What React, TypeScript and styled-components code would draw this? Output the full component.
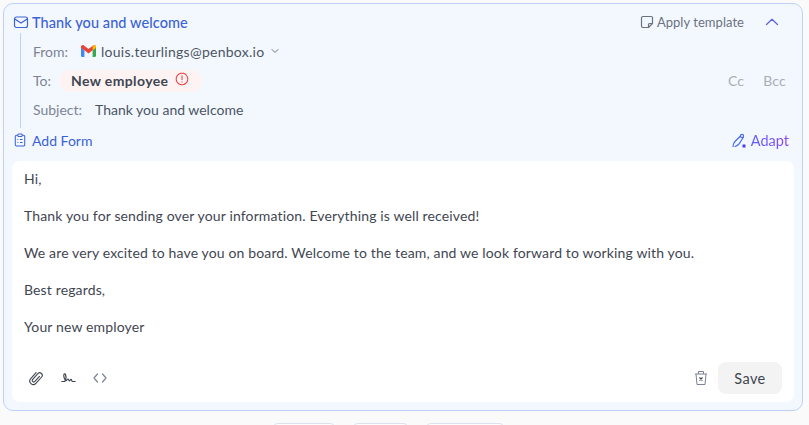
import React from 'react';
import styled, { createGlobalStyle } from 'styled-components';

const GlobalStyle = createGlobalStyle`
  html, body {
    margin: 0;
    height: 425px;
    overflow: hidden;
    background: #fafafa;
    font-family: 'Lato', 'Open Sans', sans-serif;
  }
`;

const Page = styled.div`
  height: 425px;
  padding: 3px 6px 0 3px;
  box-sizing: border-box;
  overflow: hidden;
`;

const Card = styled.section`
  height: 408px;
  box-sizing: border-box;
  background: #f3f8ff;
  border: 1px solid #bdd1f7;
  border-radius: 10px;
  padding: 7px 8px 8px;
  display: flex;
  flex-direction: column;
`;

const TitleRow = styled.div`
  display: flex;
  align-items: center;
  height: 22px;
  padding-left: 1px;
`;

const Title = styled.h1`
  margin: 0 0 0 3px;
  font-size: 14.5px;
  font-weight: 500;
  color: #3b62d6;
  letter-spacing: 0.08px;
`;

const HeaderActions = styled.div`
  margin-left: auto;
  display: flex;
  align-items: center;
  color: #6b7280;
  font-size: 13px;
  padding-right: 15px;
`;

const ApplyLabel = styled.span`
  margin: 0 21px 0 3px;
  letter-spacing: 0.04px;
`;

const Fields = styled.div`
  margin-left: 8px;
  border-left: 1px solid #bdd1f7;
  padding: 3px 0 0 12px;
  height: 95px;
  box-sizing: border-box;
  display: flex;
  flex-direction: column;
`;

const FieldRow = styled.div`
  height: 29px;
  flex-shrink: 0;
  display: flex;
  align-items: center;
  font-size: 14px;
  color: #4b5563;
  &:first-child {
    height: 30px;
  }
`;

const Label = styled.span<{ $width: number }>`
  width: ${({ $width }) => $width}px;
  color: #7b8494;
  flex-shrink: 0;
`;

const Sender = styled.span`
  margin-left: 4px;
  display: flex;
  align-items: center;
  gap: 5px;
  letter-spacing: 0.27px;
`;

const Pill = styled.span`
  display: flex;
  align-items: center;
  height: 22px;
  padding: 0 13px 0 12px;
  background: #fdf3f3;
  border-radius: 11px;
  font-weight: 700;
  color: #3f4652;
  gap: 7px;
  letter-spacing: 0.38px;
`;

const CopyLinks = styled.span`
  margin-left: auto;
  display: flex;
  gap: 19px;
  padding-right: 8px;
  color: #a9aeb9;
  font-size: 14px;
  letter-spacing: 0.2px;
`;

const FormRow = styled.div`
  height: 24px;
  display: flex;
  align-items: center;
  padding: 0 5px 0 2px;
  margin-bottom: 9px;
`;

const AddForm = styled.span`
  display: flex;
  align-items: center;
  gap: 6px;
  color: #3b62d6;
  font-size: 14px;
`;

const Adapt = styled.span`
  margin-left: auto;
  display: flex;
  align-items: center;
  gap: 4px;
  font-size: 14.5px;
  background: linear-gradient(90deg, #4a6cf5, #8a45ff);
  -webkit-background-clip: text;
  background-clip: text;
  color: transparent;
`;

const Editor = styled.div`
  flex: 1;
  background: #fff;
  border-radius: 8px;
  display: flex;
  flex-direction: column;
  padding: 6px 12px 8px;
`;

const Body = styled.div`
  flex: 1;
  font-size: 14px;
  color: #3f4652;
`;

const Para = styled.p`
  margin: 0;
  height: 37px;
  line-height: 23px;
  letter-spacing: 0.14px;
`;

const Toolbar = styled.div`
  display: flex;
  align-items: center;
  padding: 0 0 0 4px;
`;

const ToolGroup = styled.div`
  display: flex;
  align-items: center;
  gap: 17px;
`;

const SaveGroup = styled.div`
  margin-left: auto;
  display: flex;
  align-items: center;
  gap: 10px;
`;

const SaveButton = styled.button`
  width: 64px;
  height: 32px;
  border: none;
  border-radius: 8px;
  background: #f3f3f3;
  color: #3f4652;
  font: 400 14.5px 'Lato', sans-serif;
  letter-spacing: 0.4px;
`;

const Footer = styled.div`
  display: flex;
  margin: 12px 0 0 269px;
  gap: 16px;
`;

const GhostButton = styled.div<{ $width: number }>`
  width: ${({ $width }) => $width}px;
  height: 20px;
  box-sizing: border-box;
  background: #fdfdfe;
  border: 1px solid #dbe2ee;
  border-radius: 6px;
`;

const MailIcon = () => (
  <svg width="16" height="16" viewBox="0 0 16 16" fill="none" stroke="#3b62d6" strokeWidth="1.2">
    <rect x="1.5" y="3" width="13" height="10.5" rx="2" />
    <path d="M1.8 5 8 9l6.2-4" />
  </svg>
);

const NoteIcon = () => (
  <svg width="14" height="14" viewBox="0 0 14 14" fill="none" stroke="#6b7280" strokeWidth="1.2" strokeLinejoin="round">
    <path d="M8.5 12.500H3a1.500 1.500 0 0 1-1.500-1.500V3A1.500 1.500 0 0 1 3 1.500h8A1.500 1.500 0 0 1 12.500 3v5.500z" />
    <path d="M8.500 12.500V9.500a1 1 0 0 1 1-1h3" />
  </svg>
);

const ChevronUp = () => (
  <svg width="14" height="14" viewBox="0 0 14 14" fill="none" stroke="#5b62e0" strokeWidth="1.200" strokeLinecap="round" strokeLinejoin="round">
    <path d="M1.500 9.500 7 4.200l5.500 5.300" />
  </svg>
);

const ChevronDown = () => (
  <svg width="8" height="6" viewBox="0 0 8 6" fill="none" stroke="#6b7280" strokeWidth="1" strokeLinecap="round" strokeLinejoin="round" style={{ marginLeft: 2 }}>
    <path d="M1 1.500 4 4.500l3-3" />
  </svg>
);

const GmailIcon = () => (
  <svg width="15" height="12" viewBox="0 0 15 12">
    <path d="M0 2v8.800C0 11.500.5 12 1.200 12H3.400V5.300z" fill="#4285f4" />
    <path d="M15 2v8.800c0 .7-.5 1.200-1.200 1.200h-2.200V5.300z" fill="#34a853" />
    <path d="M3.400 5.300 0 2.700V1.800C0 .3 1.700-.5 2.900.400L7.500 3.900l4.600-3.500C13.300-.5 15 .3 15 1.800v.9l-3.400 2.600L7.500 8.400z" fill="#ea4335" />
    <path d="M11.600 5.300 15 2.700V1.800C15 .3 13.300-.5 12.100.400L11.600.8z" fill="#fbbc04" />
  </svg>
);

const AlertIcon = () => (
  <svg width="14" height="14" viewBox="0 0 14 14" fill="none" stroke="#e5484d" strokeWidth="1.100" strokeLinecap="round" style={{ marginTop: -4 }}>
    <circle cx="7" cy="7" r="5.800" strokeDasharray="3 0.600" />
    <path d="M7 3.800v3.800M7 9.800v.2" />
  </svg>
);

const ClipboardIcon = () => (
  <svg width="12" height="14" viewBox="0 0 14 16" fill="none" stroke="#3b62d6" strokeWidth="1.200" strokeLinejoin="round">
    <path d="M4.500 2.500H3A1.500 1.500 0 0 0 1.500 4v9.500A1.500 1.500 0 0 0 3 15h8a1.500 1.500 0 0 0 1.500-1.500V4A1.500 1.500 0 0 0 11 2.500H9.500" />
    <rect x="4.500" y="1" width="5" height="3" rx="1" />
    <path d="M4 7.500h1M7 7.500h3M4 11h1M7 11h3" />
  </svg>
);

const AdaptIcon = () => (
  <svg width="15" height="15" viewBox="0 0 15 15" fill="none" stroke="#4a6cf5" strokeWidth="1.200" strokeLinecap="round">
    <path d="M1 13.500C1 11.500 1.500 10 3 8.500L8.500 3" />
    <path d="M3 13.500C5 13 6 12 7 11L11.200 4.500" />
    <circle cx="10" cy="3" r="1.600" />
    <rect x="10.500" y="11.500" width="3" height="3" fill="#4a3fe0" stroke="none" />
  </svg>
);

const PaperclipIcon = () => (
  <svg width="16" height="16" viewBox="0 0 16 16" fill="none" stroke="#3f4652" strokeWidth="1.100" strokeLinecap="round" strokeLinejoin="round">
    <g transform="rotate(42 8 8)">
      <path d="M4.500 4v8a3.500 3.500 0 0 0 7 0V3.500a2.500 2.500 0 0 0-5 0v7.800a1.500 1.500 0 0 0 3 0V4.500" />
    </g>
  </svg>
);

const SignatureIcon = () => (
  <svg width="15" height="12" viewBox="0 0 15 12" fill="none" stroke="#3f4652" strokeWidth="1.150" strokeLinecap="round" strokeLinejoin="round">
    <path d="M.8 9.500h3C5 7.500 5.300 4.500 4.500 2.500 3.800 1 2.500 2 2.800 4.200 3.100 6.500 4.300 8.800 5.200 8.600 6 8.400 6.300 7 7 7s.6 2 1.400 1.900C9 8.800 9.200 7.300 10 7.300c.7 0 .6 2.200 1.500 2.200h2.700" />
  </svg>
);

const CodeIcon = () => (
  <svg width="14" height="10" viewBox="0 0 14 10" fill="none" stroke="#7b8494" strokeWidth="1.200" strokeLinecap="round" strokeLinejoin="round">
    <path d="M4.500 1 1 5l3.500 4M9.500 1 13 5 9.500 9" />
  </svg>
);

const TrashIcon = () => (
  <svg width="14" height="16" viewBox="0 0 14 16" fill="none" stroke="#7b8494" strokeWidth="1" strokeLinejoin="round">
    <path d="M1 4h12M2 4l1 10.500h8L12 4M4.500 4V1.500h5V4" />
    <path d="M5.500 7.500 8.500 10.500M8.500 7.500 5.500 10.500" strokeWidth="1.200" stroke="#3f4652" />
  </svg>
);

const App = () => {
  return (
    <>
      <GlobalStyle />
      <Page>
        <Card>
          <TitleRow>
            <MailIcon />
            <Title>Thank you and welcome</Title>
            <HeaderActions>
              <NoteIcon />
              <ApplyLabel>Apply template</ApplyLabel>
              <ChevronUp />
            </HeaderActions>
          </TitleRow>
          <Fields>
            <FieldRow>
              <Label $width={44}>From:</Label>
              <Sender>
                <GmailIcon />
                louis.teurlings@penbox.io
                <ChevronDown />
              </Sender>
            </FieldRow>
            <FieldRow>
              <Label $width={26}>To:</Label>
              <Pill>
                New employee
                <AlertIcon />
              </Pill>
              <CopyLinks>
                <span>Cc</span>
                <span>Bcc</span>
              </CopyLinks>
            </FieldRow>
            <FieldRow>
              <Label $width={62}>Subject:</Label>
              <span>Thank you and welcome</span>
            </FieldRow>
          </Fields>
          <FormRow>
            <AddForm>
              <ClipboardIcon />
              Add Form
            </AddForm>
            <Adapt>
              <AdaptIcon />
              Adapt
            </Adapt>
          </FormRow>
          <Editor>
            <Body>
              <Para>Hi,</Para>
              <Para>Thank you for sending over your information. Everything is well received!</Para>
              <Para>We are very excited to have you on board. Welcome to the team, and we look forward to working with you.</Para>
              <Para>Best regards,</Para>
              <Para>Your new employer</Para>
            </Body>
            <Toolbar>
              <ToolGroup>
                <PaperclipIcon />
                <SignatureIcon />
                <CodeIcon />
              </ToolGroup>
              <SaveGroup>
                <TrashIcon />
                <SaveButton>Save</SaveButton>
              </SaveGroup>
            </Toolbar>
          </Editor>
        </Card>
        <Footer>
          <GhostButton $width={64} />
          <GhostButton $width={57} />
          <GhostButton $width={80} />
        </Footer>
      </Page>
    </>
  );
};

export default App;
